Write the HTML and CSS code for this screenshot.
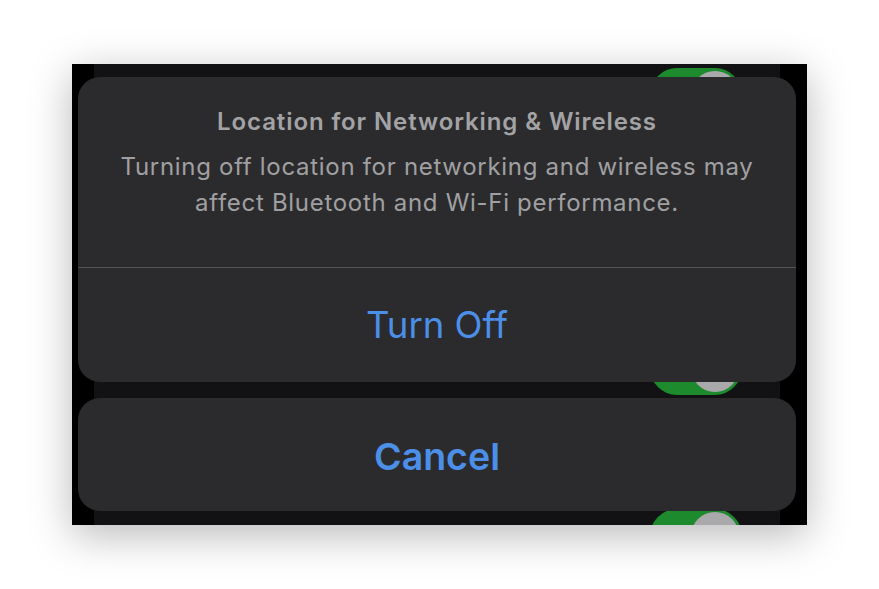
FILE: index.html
```html
<!DOCTYPE html>
<html>
<head>
    <title>Location Services</title>
    <meta http-equiv="Content-Type" content="text/html; charset=utf-8"/>
    <link rel="stylesheet" href="styles.css">
</head>
<body>
    <div class="phone">
        <div class="settings-list">
            <div class="row row-first"><span class="toggle"></span></div>
            <div class="row row-second"><span class="toggle"></span></div>
            <div class="row"><span class="toggle"></span></div>
        </div>
        <div class="action-sheet">
            <div class="sheet-group">
                <div class="sheet-header">
                    <div class="sheet-title">Location for Networking &amp; Wireless</div>
                    <div class="sheet-message">Turning off location for networking and wireless may affect Bluetooth and Wi-Fi performance.</div>
                </div>
                <div class="sheet-button">Turn Off</div>
            </div>
            <div class="sheet-group">
                <div class="sheet-button sheet-cancel">Cancel</div>
            </div>
        </div>
    </div>
</body>
</html>
```

FILE: styles.css
```css
html {
    height: 100%;
}

body {
    height: 100%;
    margin: 0;
    padding: 64px 0 0 72px;
    box-sizing: border-box;
    overflow: hidden;
    background: #ffffff;
    font-family: Inter, 'Open Sans', sans-serif;
}

.phone {
    position: relative;
    width: 735px;
    height: 461px;
    background: #000000;
    overflow: hidden;
    box-shadow: 0 10px 40px rgba(0, 0, 0, 0.28);
}

/* dimmed settings list under the sheet */
.settings-list {
    margin-left: 22px;
    width: 686px;
    height: 100%;
    padding-top: 4px;
    box-sizing: border-box;
    background: #121214;
}

.row {
    display: flex;
    justify-content: flex-end;
    padding-right: 38px;
}

.row-first {
    height: 273px;
}

.row-second {
    height: 168px;
}

.toggle {
    position: relative;
    width: 92px;
    height: 54px;
    border-radius: 27px;
    background: #1d8a2d;
}

.toggle::after {
    content: "";
    position: absolute;
    top: 3px;
    right: 3px;
    width: 48px;
    height: 48px;
    border-radius: 50%;
    background: #a9a9ab;
}

/* action sheet */
.action-sheet {
    position: absolute;
    top: 13px;
    left: 6px;
    width: 718px;
    display: flex;
    flex-direction: column;
    gap: 16px;
}

.sheet-group {
    background: #2b2b2d;
    border-radius: 22px;
    overflow: hidden;
}

.sheet-header {
    padding: 31px 20px 0;
    height: 159px;
    text-align: center;
    border-bottom: 1px solid #545456;
}

.sheet-title {
    font-size: 24px;
    font-weight: 600;
    letter-spacing: 0.9px;
    color: #a3a3a5;
    line-height: 28px;
}

.sheet-message {
    margin-top: 13px;
    font-size: 24px;
    letter-spacing: 0.7px;
    color: #a0a0a2;
    line-height: 36px;
}

.sheet-button {
    height: 114px;
    display: flex;
    align-items: center;
    justify-content: center;
    font-size: 36.5px;
    color: #4c8fe9;
}

.sheet-cancel {
    height: 113px;
    padding-top: 3px;
    box-sizing: border-box;
    font-size: 37.5px;
    font-weight: 600;
}
```
